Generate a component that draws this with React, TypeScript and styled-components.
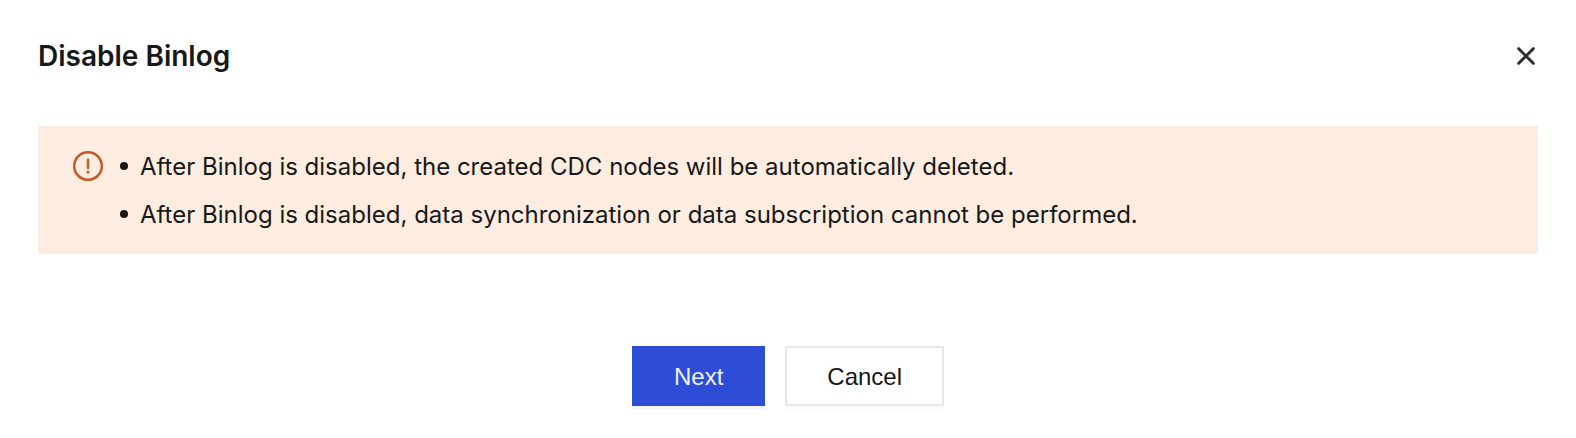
import React from "react";
import styled, { createGlobalStyle } from "styled-components";

const GlobalStyle = createGlobalStyle`
  * {
    box-sizing: border-box;
  }

  body {
    margin: 0;
    background: #ffffff;
    color: #181818;
    font-family: Inter, "Liberation Sans", sans-serif;
    font-size: 24px;
  }
`;

const Dialog = styled.section`
  display: flex;
  flex-direction: column;
  padding: 36px 38px 32px;
`;

const Header = styled.header`
  display: flex;
  align-items: center;
  justify-content: space-between;
  margin-bottom: 50px;
`;

const Title = styled.h1`
  margin: 0;
  font-size: 28px;
  font-weight: 600;
  line-height: 40px;
`;

const CloseButton = styled.button`
  display: flex;
  padding: 2px;
  border: 0;
  background: transparent;
  color: #2c2c2c;
  cursor: pointer;
`;

const Alert = styled.div`
  display: flex;
  gap: 16px;
  padding: 17px 34px 15px;
  background: #fcede0;
`;

const AlertIcon = styled.svg`
  flex: none;
  width: 32px;
  height: 32px;
  margin-top: 7px;
  color: #c4592a;
`;

const Notes = styled.ul`
  margin: 0;
  padding: 0;
  list-style: none;
`;

const Note = styled.li`
  display: flex;
  gap: 12px;
  line-height: 48px;

  &::before {
    content: "";
    flex: none;
    width: 8px;
    height: 8px;
    margin-top: 19px;
    border-radius: 50%;
    background: #181818;
  }
`;

const Actions = styled.footer`
  display: flex;
  justify-content: center;
  gap: 20px;
  margin-top: 92px;
`;

const Button = styled.button<{ $primary?: boolean }>`
  padding: 2px 40px 0;
  border: 2px solid ${({ $primary }) => ($primary ? "#2d4dd7" : "#e6e7ee")};
  border-radius: 0;
  background: ${({ $primary }) => ($primary ? "#2d4dd7" : "#ffffff")};
  box-shadow: 0 4px 0 ${({ $primary }) => ($primary ? "#f4f5fd" : "#fbfbfb")};
  color: ${({ $primary }) => ($primary ? "#eef1ff" : "#181818")};
  font-family: "Liberation Sans", Arial, sans-serif;
  font-size: 24px;
  line-height: 54px;
  cursor: pointer;
`;

const notes = [
  "After Binlog is disabled, the created CDC nodes will be automatically deleted.",
  "After Binlog is disabled, data synchronization or data subscription cannot be performed.",
];

export default function App() {
  return (
    <>
      <GlobalStyle />
      <Dialog role="dialog" aria-labelledby="dialog-title">
        <Header>
          <Title id="dialog-title">Disable Binlog</Title>
          <CloseButton type="button" aria-label="Close">
            <svg width="20" height="20" viewBox="0 0 20 20" fill="none" stroke="currentColor" strokeWidth="3" strokeLinecap="round">
              <path d="M2.7 2.7l14.6 14.6M17.3 2.7L2.7 17.3" />
            </svg>
          </CloseButton>
        </Header>
        <Alert role="alert">
          <AlertIcon viewBox="0 0 32 32" fill="none" stroke="currentColor" aria-hidden="true">
            <circle cx="16" cy="16" r="13.8" strokeWidth="2.5" />
            <path d="M16 9.8v8.2" strokeWidth="2.5" strokeLinecap="round" />
            <circle cx="16" cy="22" r="1.5" fill="currentColor" stroke="none" />
          </AlertIcon>
          <Notes>
            {notes.map((note) => (
              <Note key={note}>{note}</Note>
            ))}
          </Notes>
        </Alert>
        <Actions>
          <Button type="button" $primary>
            Next
          </Button>
          <Button type="button">Cancel</Button>
        </Actions>
      </Dialog>
    </>
  );
}
